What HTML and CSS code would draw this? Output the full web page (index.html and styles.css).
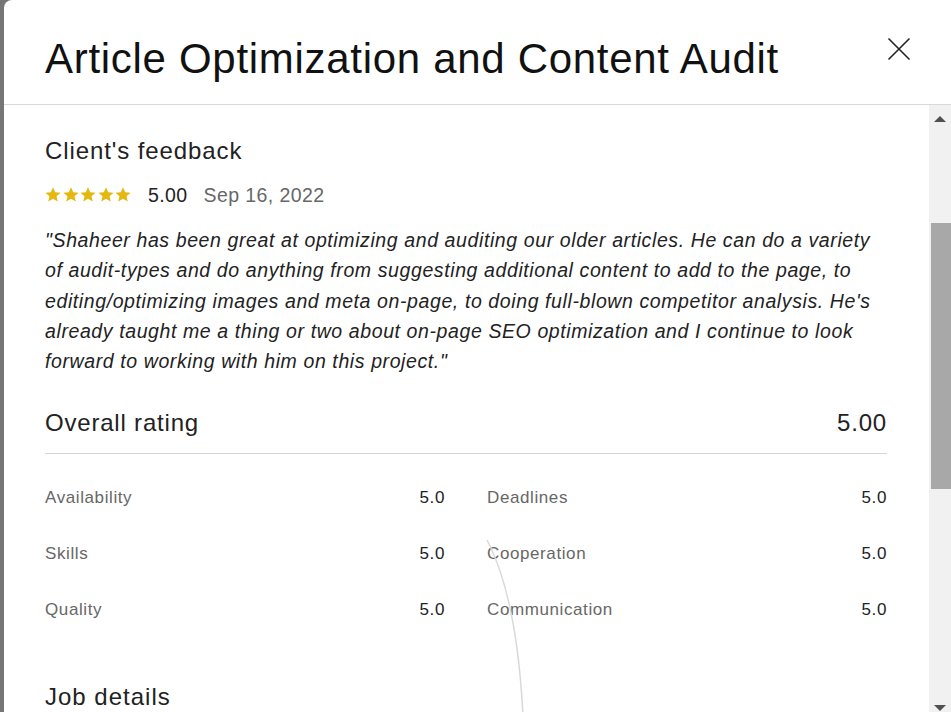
FILE: index.html
```html
<!DOCTYPE html>
<html lang="en">
<head>
    <meta charset="UTF-8">
    <meta name="viewport" content="width=device-width, initial-scale=1.0">
    <title>Article Optimization and Content Audit</title>
    <link rel="stylesheet" href="styles.css">
</head>
<body>
    <div class="modal">
        <div class="modal-header">
            <h1>Article Optimization and Content Audit</h1>
            <button class="close-button" aria-label="Close">
                <svg width="24" height="24" viewBox="0 0 24 24">
                    <path d="M1.5 1.5 L22.5 22.5 M22.5 1.5 L1.5 22.5" stroke="#222" stroke-width="1.6" fill="none"/>
                </svg>
            </button>
        </div>

        <div class="modal-body">
            <div class="content">
                <h2 class="feedback-title">Client's feedback</h2>

                <div class="rating-line">
                    <div class="stars">
                        <svg viewBox="0 0 16 16"><path d="M8 0.3 L10.2 5.2 L15.6 5.7 L11.5 9.3 L12.8 14.6 L8 11.8 L3.2 14.6 L4.5 9.3 L0.4 5.7 L5.8 5.2 Z"/></svg>
                        <svg viewBox="0 0 16 16"><path d="M8 0.3 L10.2 5.2 L15.6 5.7 L11.5 9.3 L12.8 14.6 L8 11.8 L3.2 14.6 L4.5 9.3 L0.4 5.7 L5.8 5.2 Z"/></svg>
                        <svg viewBox="0 0 16 16"><path d="M8 0.3 L10.2 5.2 L15.6 5.7 L11.5 9.3 L12.8 14.6 L8 11.8 L3.2 14.6 L4.5 9.3 L0.4 5.7 L5.8 5.2 Z"/></svg>
                        <svg viewBox="0 0 16 16"><path d="M8 0.3 L10.2 5.2 L15.6 5.7 L11.5 9.3 L12.8 14.6 L8 11.8 L3.2 14.6 L4.5 9.3 L0.4 5.7 L5.8 5.2 Z"/></svg>
                        <svg viewBox="0 0 16 16"><path d="M8 0.3 L10.2 5.2 L15.6 5.7 L11.5 9.3 L12.8 14.6 L8 11.8 L3.2 14.6 L4.5 9.3 L0.4 5.7 L5.8 5.2 Z"/></svg>
                    </div>
                    <span class="score">5.00</span>
                    <span class="date">Sep 16, 2022</span>
                </div>

                <p class="quote">"Shaheer has been great at optimizing and auditing our older articles. He can do a variety of audit-types and do anything from suggesting additional content to add to the page, to editing/optimizing images and meta on-page, to doing full-blown competitor analysis. He's already taught me a thing or two about on-page SEO optimization and I continue to look forward to working with him on this project."</p>

                <div class="overall">
                    <span>Overall rating</span>
                    <span>5.00</span>
                </div>

                <div class="scores">
                    <div class="score-row"><span class="label">Availability</span><span class="value">5.0</span></div>
                    <div class="score-row"><span class="label">Deadlines</span><span class="value">5.0</span></div>
                    <div class="score-row"><span class="label">Skills</span><span class="value">5.0</span></div>
                    <div class="score-row"><span class="label">Cooperation</span><span class="value">5.0</span></div>
                    <div class="score-row"><span class="label">Quality</span><span class="value">5.0</span></div>
                    <div class="score-row"><span class="label">Communication</span><span class="value">5.0</span></div>
                </div>

                <h2 class="job-title">Job details</h2>
            </div>

            <div class="scrollbar">
                <div class="arrow arrow-up"></div>
                <div class="track">
                    <div class="thumb"></div>
                </div>
                <div class="arrow arrow-down"></div>
            </div>

            <svg class="stray-line" width="60" height="180" viewBox="0 0 60 180">
                <path d="M2 2 C 22 40, 34 100, 38 178" stroke="#d8d8d8" stroke-width="1.5" fill="none"/>
            </svg>
        </div>
    </div>
</body>
</html>
```

FILE: styles.css
```css
html, body {
    margin: 0;
    height: 100%;
}

body {
    font-family: "Liberation Sans", Arial, sans-serif;
    background-color: #767676;
    color: #222;
    overflow: hidden;
}

.modal {
    margin-left: 4px;
    height: 722px;
    background: #fff;
    border-top-left-radius: 8px;
    display: flex;
    flex-direction: column;
}

.modal-header {
    height: 105px;
    box-sizing: border-box;
    border-bottom: 1px solid #d9d9d9;
    padding: 0 40px 0 41px;
    display: flex;
    align-items: center;
    justify-content: space-between;
    flex-shrink: 0;
}

.modal-header h1 {
    margin: 0;
    font-size: 42px;
    font-weight: 400;
    letter-spacing: 0.7px;
    color: #111;
    padding-top: 14px;
}

.close-button {
    background: none;
    border: none;
    padding: 0;
    width: 24px;
    height: 24px;
    margin-top: -7px;
    cursor: pointer;
}

.modal-body {
    flex: 1;
    display: flex;
    position: relative;
    overflow: hidden;
}

.content {
    flex: 1;
    padding: 30px 42px 0 41px;
}

.feedback-title, .job-title {
    margin: 0;
    font-size: 24px;
    font-weight: 400;
    line-height: 32px;
    letter-spacing: 0.9px;
    color: #222;
}

.rating-line {
    display: flex;
    align-items: center;
    margin-top: 16px;
    height: 24px;
    font-size: 19.5px;
    letter-spacing: 0.4px;
}

.stars {
    display: flex;
    gap: 1.5px;
    margin-right: 17px;
}

.stars svg {
    width: 16px;
    height: 16px;
    fill: #e3b80f;
}

.score {
    color: #222;
    margin-right: 16px;
}

.date {
    color: #676767;
}

.quote {
    margin: 18px 0 0;
    font-size: 19.5px;
    line-height: 30.3px;
    letter-spacing: 0.6px;
    font-style: italic;
    color: #222;
    padding-right: 4px;
}

.overall {
    display: flex;
    justify-content: space-between;
    font-size: 24px;
    line-height: 32px;
    letter-spacing: 0.8px;
    margin-top: 31px;
    padding-bottom: 14px;
    border-bottom: 1px solid #d5d5d5;
}

.scores {
    display: grid;
    grid-template-columns: 1fr 1fr;
    column-gap: 42px;
    margin-top: 33px;
}

.score-row {
    display: flex;
    justify-content: space-between;
    height: 56px;
    font-size: 17px;
    line-height: 22px;
    letter-spacing: 0.6px;
}

.score-row .label {
    color: #676767;
}

.score-row .value {
    color: #222;
}

.job-title {
    margin-top: 26px;
    letter-spacing: 1px;
}

.scrollbar {
    width: 22px;
    background: #f1f1f1;
    display: flex;
    flex-direction: column;
    flex-shrink: 0;
}

.arrow {
    height: 28px;
    display: flex;
    align-items: center;
    justify-content: center;
}

.arrow-up::before {
    content: "";
    border-left: 6px solid transparent;
    border-right: 6px solid transparent;
    border-bottom: 6px solid #505050;
}

.arrow-down::before {
    content: "";
    border-left: 6px solid transparent;
    border-right: 6px solid transparent;
    border-top: 6px solid #505050;
}

.track {
    flex: 1;
    padding-top: 90px;
}

.thumb {
    margin-left: 2px;
    height: 266px;
    background: #a8a8a8;
}

.stray-line {
    position: absolute;
    left: 481px;
    top: 433px;
}
```
